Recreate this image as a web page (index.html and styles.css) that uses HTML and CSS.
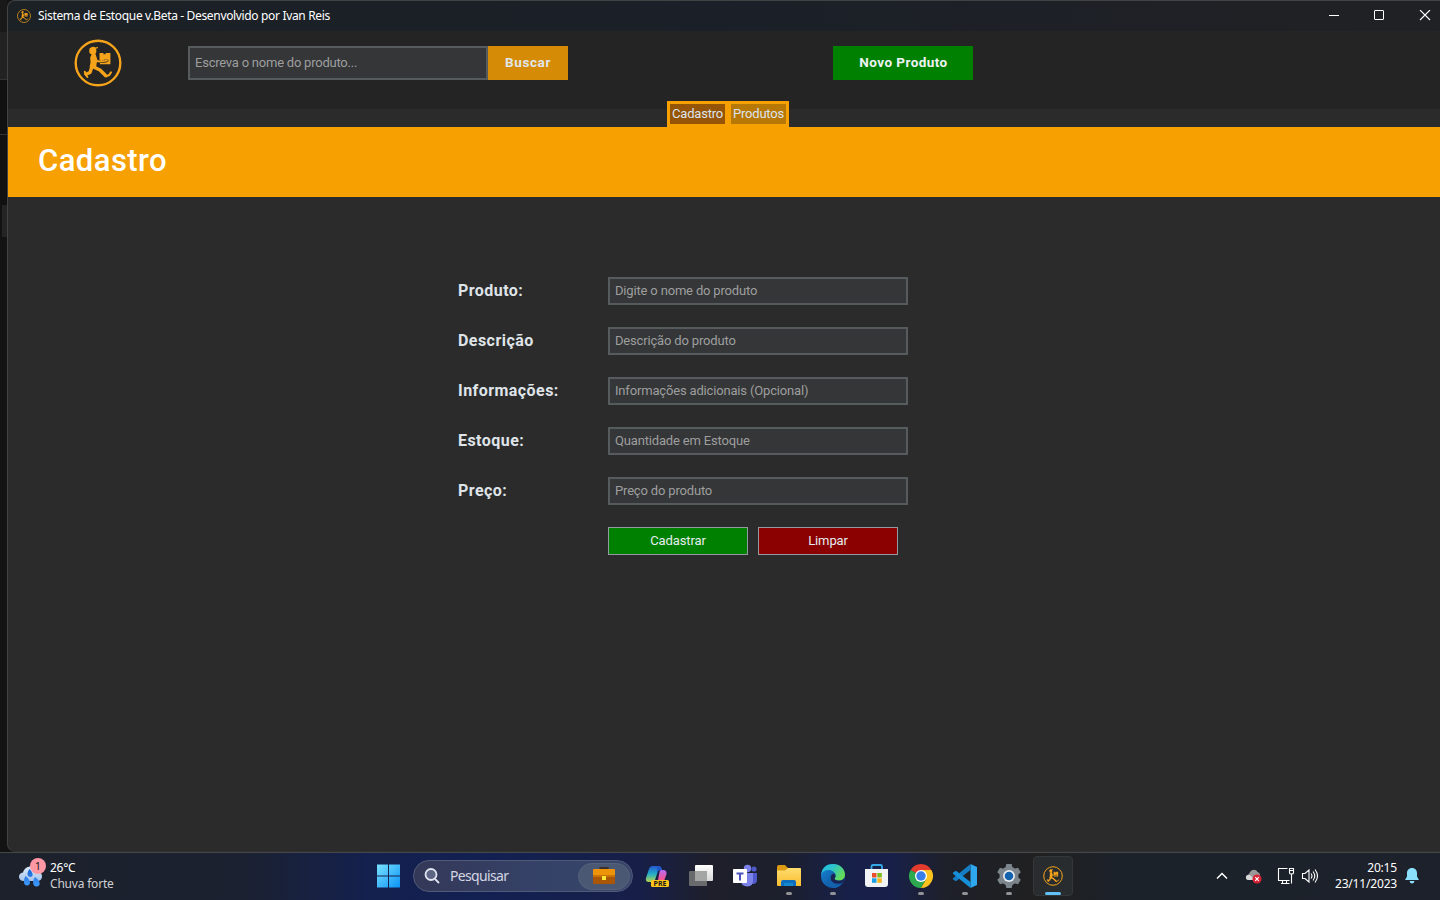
FILE: index.html
```html
<!DOCTYPE html>
<html lang="pt-BR">
<head>
<meta charset="utf-8">
<title>Sistema de Estoque</title>
<link rel="stylesheet" href="styles.css">
</head>
<body>
<svg class="defs" aria-hidden="true">
  <symbol id="runner" viewBox="0 0 48 48">
    <circle cx="24" cy="24" r="22.3" fill="none" stroke="#f5a31a" stroke-width="2.4"/>
    <g fill="#f5a31a">
      <circle cx="18.800" cy="12" r="3.600"/>
      <path d="M15.500 9.500q3-2.600 6-1.100l2.300-.5.2 1-2.500 1.200-5.500 1.200z"/>
      <path d="M18 14.500l3.500.6 1.800 5.400-.8 5-.5 4-6.500-1 1-5-.3-5z"/>
      <path d="M25.500 14h4v1.600l1.100-.7 1.100.7V14h4.700v11.300H26v-1.300l6-.5 2.500-1.200-.4-2-4 .5-1.500.8-3.100-.2z"/>
    </g>
    <g fill="none" stroke="#f5a31a" stroke-linecap="round" stroke-linejoin="round">
      <path d="M20 21.500l5.500 1 5.500-.6 2-.6" stroke-width="1.900"/>
      <path d="M18 27.500l-2 6-4 1.700" stroke-width="3.400"/>
      <path d="M10.800 32.700l.4 2.300 2.200 3" stroke-width="2"/>
      <path d="M19.500 28l6.500 3 5.500 5.500" stroke-width="3.400"/>
      <path d="M32.200 37.300l3.100-1.300 1.700-2.700" stroke-width="2.100"/>
    </g>
  </symbol>
</svg>

<div class="desktop">
  <div class="stage">
    <div class="behind"><i class="b1"></i><i class="b2"></i><i class="b3"></i><i class="b4"></i><i class="b5"></i></div>
    <main class="window">
      <div class="titlebar">
        <svg class="title-icon"><use href="#runner"/></svg>
        <span class="title-text">Sistema de Estoque v.Beta - Desenvolvido por Ivan Reis</span>
        <svg class="controls" viewBox="0 0 104 12" fill="none" stroke="#fff">
          <path d="M1 5.500H11"/><rect x="46.500" y=".500" width="9" height="9" rx=".5"/><path d="M92 0l10 10M102 0L92 10" stroke-width="1.100"/>
        </svg>
      </div>
      <header class="topbar">
        <svg class="logo"><use href="#runner"/></svg>
        <div class="search"><span>Escreva o nome do produto...</span></div>
        <div class="find">Buscar</div>
        <div class="new">Novo Produto</div>
      </header>
      <nav class="tabrow"><div class="tabs"><span class="tab active">Cadastro</span><span class="tab">Produtos</span></div></nav>
      <h1 class="banner">Cadastro</h1>
      <section class="form">
        <label>Produto:</label><div class="field">Digite o nome do produto</div>
        <label>Descrição</label><div class="field">Descrição do produto</div>
        <label>Informações:</label><div class="field">Informações adicionais (Opcional)</div>
        <label>Estoque:</label><div class="field">Quantidade em Estoque</div>
        <label>Preço:</label><div class="field">Preço do produto</div>
        <div class="actions"><div class="btn ok">Cadastrar</div><div class="btn clear">Limpar</div></div>
      </section>
    </main>
  </div>

  <footer class="taskbar">
    <div class="weather">
      <div class="cloud">
        <svg viewBox="0 0 26 24" width="26" height="24">
          <defs><linearGradient id="cl" x2="0" y2="1"><stop stop-color="#dcebfb"/><stop offset="1" stop-color="#a5c3ea"/></linearGradient>
          <linearGradient id="dr" x2="0" y2="1"><stop stop-color="#1a62d0"/><stop offset="1" stop-color="#3f9dff"/></linearGradient></defs>
          <path d="M6 17C-.500 17-.500 9 5 8.500 7 1 17 .500 19 7c6 .500 7 9 1 10z" fill="url(#cl)"/>
          <path d="M7.500 12c-2.500 5-2 9.500 1.500 9.500s5-4.500-1.500-9.500zM17 13c-3 4-2.500 9.500 1.500 9.500s5-5-1.500-9.500zM11.500 5c-3 4-2.500 8 .8 8s3.200-4-.8-8z" fill="url(#dr)"/>
        </svg>
        <b class="badge">1</b>
      </div>
      <div class="wtext"><span class="temp">26°C</span><span class="cond">Chuva forte</span></div>
    </div>

    <div class="apps">
      <div class="app start"><svg width="24" height="24" viewBox="0 0 24 24"><defs><linearGradient id="wn" gradientUnits="userSpaceOnUse" x1="0" y1="0" x2="24" y2="24"><stop stop-color="#7de5ff"/><stop offset="1" stop-color="#0a91f5"/></linearGradient></defs><path fill="url(#wn)" d="M1 .500h11v11H1zM13 .500h11v11H13zM1 12.500h11v11H1zM13 12.500h11v11H13z"/></svg></div>
      <div class="pill">
        <svg width="16" height="16" viewBox="0 0 16 16" fill="none" stroke="#dfe4f0" stroke-width="1.800"><circle cx="7" cy="6.500" r="5.500" fill="#5c6584"/><path d="M11 11l4 4"/></svg>
        <span class="ptext">Pesquisar</span>
        <div class="gem"><svg width="24" height="20" viewBox="0 0 24 20"><path d="M8.500 4V2h7v2" fill="none" stroke="#3b302a" stroke-width="2"/><rect x="1" y="3" width="22" height="15" rx="1" fill="#a95606"/><path d="M1 4q0-1 1-1h20q1 0 1 1v7H1z" fill="#ee9409"/><path d="M1 9h22v2H1z" fill="#c97207"/><path d="M10 10h4v4h-4z" fill="#ffe534"/></svg></div>
      </div>
      <div class="app"><svg width="26" height="26" viewBox="0 0 26 26"><defs><linearGradient id="c1" x2="0" y2="1"><stop stop-color="#2458cf"/><stop offset=".5" stop-color="#22aeca"/><stop offset="1" stop-color="#b6d447"/></linearGradient><linearGradient id="c2" x2="0" y2="1"><stop stop-color="#b56cf5"/><stop offset=".6" stop-color="#f65492"/><stop offset="1" stop-color="#ff9f61"/></linearGradient></defs>
        <path d="M8 3h7q2 0 3 4h-2q-2 0-3 4l-2 6q-.500 2-3 2H5q-4 0-3-4L5 6q1-3 3-3z" fill="url(#c1)"/><path d="M17 7h2q4 0 3.500 4L20 18q-1 4-5 4h-4q2 0 3-5l1.500-8q.500-2 1.500-2z" fill="url(#c2)"/><path d="M14 3h1q2 0 3 4h-2q-2 0-3 3V5q0-1 1-2z" fill="#2357c7"/>
        <rect x="7" y="17" width="18" height="7" rx="1.500" fill="#ffc51a"/><text x="16" y="23.200" class="pre">PRE</text></svg></div>
      <div class="app"><svg width="26" height="24" viewBox="0 0 26 24"><defs><linearGradient id="tv" x2="0" y2="1"><stop stop-color="#fff"/><stop offset="1" stop-color="#d6d6d8"/></linearGradient></defs><rect x="7" y="1" width="18" height="16" rx="1" fill="url(#tv)"/><path d="M2 7h17v15H2q-1 0-1-1V8q0-1 1-1z" fill="#696a6b"/><path d="M7 7h12v10H7z" fill="#a4a5a5"/></svg></div>
      <div class="app"><svg width="26" height="24" viewBox="0 0 26 24"><circle cx="15.500" cy="4.500" r="3.700" fill="#7b83eb"/><circle cx="22" cy="5" r="2.600" fill="#5059c9"/><path d="M18 9h7v7q0 4-4 4h-3z" fill="#5059c9"/><path d="M9 9h12v8q0 5-5.500 5.500Q9 22 9 17z" fill="#7b83eb"/><rect x="1" y="5" width="14" height="14" rx=".8" fill="#fff"/><path d="M4.500 8.500h7v2H9v6H7v-6H4.500z" fill="#4b53bc"/></svg></div>
      <div class="app run"><svg width="26" height="24" viewBox="0 0 26 24"><defs><linearGradient id="fd" x2="0" y2="1"><stop stop-color="#ffdd70"/><stop offset="1" stop-color="#f8bd2d"/></linearGradient></defs><path d="M1 3q0-2 2-2h6l3 3h11q2 0 2 2v5H1z" fill="#dc9b12"/><path d="M1 6.500h8l3-2.500h12q1 0 1 1v17H2q-1 0-1-1z" fill="url(#fd)"/><path d="M5 22v-4q0-2 2-2h11q2 0 2 2v4z" fill="#0d6ebd"/><path d="M8 19h9v3H8z" fill="#1489d0"/></svg></div>
      <div class="app run"><svg width="26" height="26" viewBox="0 0 26 26"><defs><linearGradient id="e1" x2="1" y2=".5"><stop stop-color="#1bbbe8"/><stop offset=".5" stop-color="#2fc4c6"/><stop offset="1" stop-color="#63db57"/></linearGradient><linearGradient id="e2" x2="1" y2="1"><stop stop-color="#1789d8"/><stop offset="1" stop-color="#0c438d"/></linearGradient></defs><circle cx="13" cy="13" r="12" fill="url(#e2)"/><path d="M1.100 12C2 4 7 1 13 1c7 0 12 5 12 10.500 0 4-3 6-6 6-3 0-4.500-1-4.500-2 0-.7 1.200-1.200 1.200-3C15.700 9.500 12.500 7 8.500 7 5 7 2 9 1.100 12z" fill="url(#e1)"/><path d="M14.500 15.500c0 1 1.500 2.200 4.500 2.200 2 0 4-.7 5.200-2.200L23.500 19c-5 3-13 1.500-13-4 0-2.500 1.500-4 3.500-4.500 2 1.500 2 3.500.500 5z" fill="#1a2453"/><path d="M10.600 14c-.5 6 5.400 9 11 7-3 3.500-7 4.500-10 3.600-4-2-5.500-8-1-10.600z" fill="#1462ab"/></svg></div>
      <div class="app"><svg width="26" height="26" viewBox="0 0 26 26"><path d="M7.500 6V3.500q0-1.500 1.500-1.500h7.500Q18 2 18 3.500V6" fill="none" stroke="#35a9e8" stroke-width="1.800"/><path d="M1 6h23v15q0 3-3 3H4q-3 0-3-3z" fill="#f1f3f5"/><path d="M8 10h4.500v4.500H8z" fill="#e84e2b"/><path d="M13.300 10h4.500v4.500h-4.500z" fill="#80b91e"/><path d="M8 15.300h4.500v4.500H8z" fill="#19a0e6"/><path d="M13.300 15.300h4.500v4.500h-4.500z" fill="#f5b51b"/></svg></div>
      <div class="app run"><svg width="26" height="26" viewBox="0 0 26 26"><path d="M13 13L2.600 7a12 12 0 0 1 20.800 0z" fill="#e33b2e"/><path d="M13 13L2.600 7A12 12 0 0 0 13 25l5.200-9z" fill="#2da94f"/><path d="M13 7h10.400A12 12 0 0 1 13 25l5.200-9z" fill="#fcc31e"/><circle cx="13" cy="13" r="6" fill="#fff"/><circle cx="13" cy="13" r="4.700" fill="#377ee9"/></svg></div>
      <div class="app run"><svg width="26" height="26" viewBox="0 0 26 26"><path d="M18.500 1L25 4v18l-6.500 3z" fill="#2ea7ef"/><path d="M18.500 1v6L4 18.300 1 16.500v-1.200z" fill="#147dc4"/><path d="M18.500 25v-6L4 7.700 1 9.500v1.200z" fill="#168fd8"/></svg></div>
      <div class="app run"><svg width="26" height="26" viewBox="0 0 26 26"><g fill="#7c858c"><circle cx="13" cy="13" r="9.500"/><path id="tooth" d="M10.300 1h5.400l1 4.500H9.300z"/><use href="#tooth" transform="rotate(60 13 13)"/><use href="#tooth" transform="rotate(120 13 13)"/><use href="#tooth" transform="rotate(180 13 13)"/><use href="#tooth" transform="rotate(240 13 13)"/><use href="#tooth" transform="rotate(300 13 13)"/></g><circle cx="13" cy="13" r="6" fill="#e6ebef"/><circle cx="13" cy="13" r="4.300" fill="#1462ac"/></svg></div>
      <div class="app current"><svg width="20" height="20"><use href="#runner"/></svg></div>
    </div>

    <div class="tray">
      <svg class="chev" width="12" height="8" viewBox="0 0 12 8" fill="none" stroke="#fff" stroke-width="1.500"><path d="M1 6.500l5-5 5 5"/></svg>
      <svg class="drive" width="18" height="16" viewBox="0 0 18 16"><path d="M3.500 12C0 12 0 7 4 6.500 5 1 11 .500 12.500 4 16 5 16 10 13 12z" fill="#999"/><path d="M3.500 12C0 12 0 7 4 6.500l7 5.500z" fill="#d9d9d9"/><circle cx="12" cy="11" r="4.500" fill="#d82336"/><path d="M10.200 9.200l3.600 3.600M13.800 9.200l-3.600 3.600" stroke="#fff" stroke-width="1.200"/></svg>
      <svg class="net" width="18" height="18" viewBox="0 0 18 18" fill="none" stroke="#fff" stroke-width="1.100"><path d="M10.500 1.500H1.500v12h11M5.500 13.500v3M9.500 13.500v3M4 16.500h8.500M12.500 1.500h4v4.500q0 1-2 1t-2-1zM14.500 7v9.500M12.500 3.500h4"/></svg>
      <svg class="vol" width="18" height="16" viewBox="0 0 18 16" fill="none" stroke="#fff" stroke-width="1.100"><path d="M1.500 5.500h2.500L8 2v12l-4-3.500H1.500zM10 5.500q2 2.500 0 5M12 3.500q3.500 4.500 0 9M14 1.500q5 6.500 0 13"/></svg>
      <div class="clock"><span class="time">20:15</span><span class="date">23/11/2023</span></div>
      <svg class="bell" width="14" height="16" viewBox="0 0 14 16" fill="#8be0fb"><path d="M7 0c3.300 0 5 2.500 5 5v3.500l2 3.500H0l2-3.500V5c0-2.500 1.700-5 5-5zM4.500 13h5q-.500 2.500-2.500 2.500T4.500 13z"/></svg>
    </div>
  </footer>
</div>
</body>
</html>
```

FILE: styles.css
```css
* { box-sizing: border-box; }
body { margin: 0; background: #111; font-family: Roboto, sans-serif; overflow: hidden; }
.defs { position: absolute; width: 0; height: 0; }
.desktop { width: 1440px; height: 900px; display: flex; flex-direction: column; }
.stage { height: 852px; display: flex; background: #131313; }
.behind { width: 7px; display: flex; flex-direction: column; }
.behind i { display: block; }
.b1 { height: 32px; background: #191919; }
.b2 { height: 48px; background: #222; border-bottom: 1px solid #333; }
.b3 { height: 55px; background: #111; border-bottom: 1px solid #333; }
.b4 { height: 70px; background: #111; }
.b5 { height: 32px; margin-left: 2px; background: #242424; }
.window { flex: 1; display: flex; flex-direction: column; border: 1px solid #414345; border-right: 0; border-bottom-color: #303030; border-radius: 8px 0 0 8px; background: #2b2b2b; overflow: hidden; }
.titlebar { height: 30px; display: flex; align-items: center; padding: 0 8px 1px 9px; background: linear-gradient(90deg, #1c2126, #1b2028 50%, #202124); }
.title-icon { width: 14px; height: 14px; margin-right: 7px; }
.title-text { font: 12px/16px "Noto Sans", sans-serif; letter-spacing: -0.34px; color: #fff; white-space: nowrap; }
.controls { width: 104px; height: 12px; margin-left: auto; }
.topbar { height: 78px; flex-shrink: 0; display: flex; align-items: flex-start; padding: 15px 0 0 66px; background: #242424; }
.logo { width: 48px; height: 48px; margin: -7px 66px 0 0; }
.search { width: 300px; height: 34px; border: 2px solid #565b5e; background: #343638; color: #9e9e9e; padding-left: 5px; font-size: 13px; line-height: 29px; letter-spacing: -.23px; }
.find { width: 80px; height: 34px; background: #d58b06; color: #e1e6ea; font: bold 13.5px/33px Roboto, sans-serif; letter-spacing: .6px; text-align: center; }
.new { width: 140px; height: 34px; margin-left: 265px; background: #008000; color: #f0f3f5; font: bold 13.5px/33px Roboto, sans-serif; letter-spacing: .45px; padding-left: 1px; text-align: center; }
.tabrow { height: 18px; flex-shrink: 0; display: flex; padding-left: 659px; align-items: flex-end; }
.tabs { height: 26px; width: 122px; background: #f6a001; padding: 3px; display: flex; gap: 6px; }
.tab { height: 20px; width: 55px; background: #b87806; color: #dce4ee; font-size: 13px; line-height: 20px; letter-spacing: -.2px; text-align: center; white-space: nowrap; }
.tab.active { background: #965406; }
.banner { margin: 0; height: 70px; flex-shrink: 0; background: #f6a001; color: #fff; padding-left: 30px; font: 500 31px/67px Roboto, sans-serif; letter-spacing: .45px; }
.form { display: grid; grid-template-columns: 150px 300px; grid-auto-rows: 28px; row-gap: 22px; padding: 80px 0 0 450px; }
.form label { color: #dfe4e9; font: bold 16px/28px Roboto, sans-serif; letter-spacing: .45px; }
.field { border: 2px solid #565b5e; background: #343638; color: #9e9e9e; padding-left: 5px; font-size: 13px; line-height: 23px; letter-spacing: -.17px; }
.actions { grid-column: 2; display: flex; gap: 10px; }
.btn { width: 140px; height: 28px; border: 1px solid #949a9f; color: #e6edf0; font-size: 13px; line-height: 25px; letter-spacing: -.1px; text-align: center; }
.ok { background: #008000; }
.clear { background: #8b0000; }

.taskbar { height: 48px; display: flex; justify-content: space-between; border-top: 1px solid #45474a; color: #fff; font-family: "Noto Sans", sans-serif; background: linear-gradient(90deg, #1c212b 0, #1b2130 240px, #14204d 365px, #122052 480px, #171f48 640px, #1e1f2b 710px, #1c1f2c 780px, #172049 850px, #18204a 890px, #1e202a 945px, #202020 1040px, #1c222a 1120px, #1c212b 100%); }
.weather { width: 348px; margin-left: 18px; display: flex; padding-top: 5px; }
.cloud { position: relative; width: 26px; height: 30px; padding-top: 6px; margin-right: 6px; }
.badge { position: absolute; left: 12px; top: 0; width: 16px; height: 16px; border-radius: 50%; background: #ff98a4; color: #222; font: 11px/16px "Noto Sans", sans-serif; text-align: center; }
.wtext, .clock { display: flex; flex-direction: column; font-size: 12px; line-height: 16px; padding-top: 2px; }
.temp { letter-spacing: -.3px; }
.cond { color: #cfd0d3; letter-spacing: -.2px; }
.apps { height: 46px; display: flex; align-items: center; }
.app { width: 44px; height: 46px; display: flex; align-items: center; justify-content: center; position: relative; }
.start { margin-right: 3px; }
.pill { width: 220px; height: 32px; border: 1px solid #515a79; border-radius: 16px; background: linear-gradient(90deg, #343858, #354268 60%, #38466a); display: flex; align-items: center; padding: 0 2px 0 10px; margin-right: 2px; }
.ptext { margin-left: 10px; font-size: 14px; line-height: 18px; padding-bottom: 1px; letter-spacing: -.65px; color: #d3d6e2; }
.gem { width: 52px; height: 27px; margin-left: auto; border: 1px solid #56617b; border-radius: 14px; background: #4b5874; display: flex; align-items: center; justify-content: center; }
.pre { font: bold 7px "Noto Sans", sans-serif; text-anchor: middle; fill: #191919; }
.run::after, .current::after { content: ""; position: absolute; bottom: 4px; left: 19px; width: 6px; height: 3px; border-radius: 2px; background: #929296; }
.current { width: 40px; height: 40px; margin-left: 2px; border: 1px solid #34373a; border-radius: 4px; background: #292c2f; }
.current::after { left: 11px; bottom: 0; width: 16px; background: #5fc1f5; }
.tray { height: 46px; display: flex; align-items: center; margin-left: auto; padding-right: 21px; }
.drive { margin: 0 14px 0 17px; }
.net { margin-right: 6px; }
.clock { width: 70px; margin: 0 8px 0 8px; text-align: right; padding-top: 0; letter-spacing: -.18px; white-space: nowrap; align-items: flex-end; }
```
